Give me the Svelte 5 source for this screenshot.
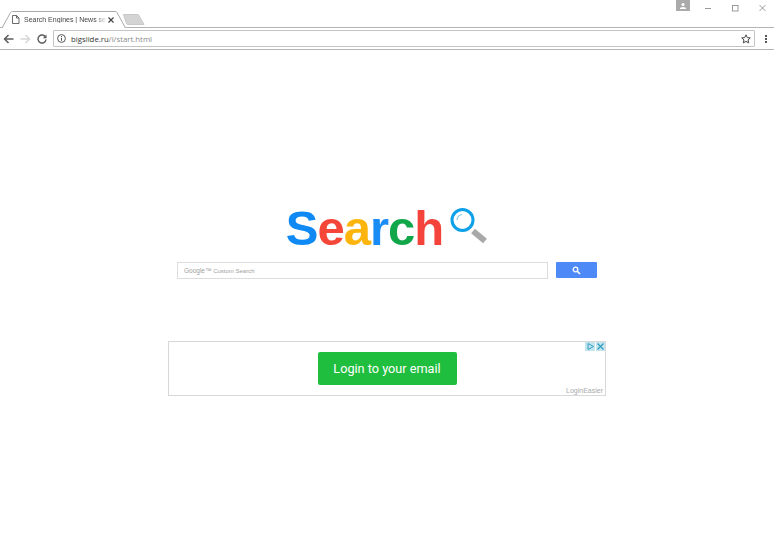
<script>
  const logoLetters = [
    { ch: 'S', color: '#0f8af5' },
    { ch: 'e', color: '#f4473a' },
    { ch: 'a', color: '#fdb50e' },
    { ch: 'r', color: '#1a8cf5' },
    { ch: 'c', color: '#12a64a' },
    { ch: 'h', color: '#f4433a' }
  ];
</script>

<div class="page">
  <header class="chrome">
    <div class="tabstrip">
      <div class="tab">
        <svg class="tab-fold" width="127" height="17" viewBox="0 0 127 17">
          <path d="M2 17 L10.500 1.500 Q11 .5 12.500 .5 L115 .5 Q116.500 .5 117 1.500 L125.500 17" fill="#fff" stroke="#a9a9a9" />
        </svg>
        <svg class="page-icon" width="8" height="9" viewBox="0 0 8 9">
          <path d="M.5.500h4L7 3v5.500H.5zM4.500.5V3H7" fill="none" stroke="#5a5a5a" stroke-width=".9" />
        </svg>
        <span class="tab-title">Search Engines | News se</span>
        <svg class="tab-x" width="6" height="6" viewBox="0 0 6 6"><path d="M.5.500l5 5M5.500.5l-5 5" stroke="#444" stroke-width="1.200" /></svg>
      </div>
      <svg class="new-tab" width="22" height="11" viewBox="0 0 22 11">
        <path d="M.5.500h14q1 0 1.500 1l5 9H5q-1 0-1.500-1z" fill="#d4d4d4" stroke="#c8c8c8" />
      </svg>
      <div class="window-controls">
        <div class="avatar">
          <svg width="8" height="8" viewBox="0 0 8 8"><circle cx="4" cy="2.400" r="1.500" fill="#fff" /><path d="M1 7V6Q4 3.800 7 6v1z" fill="#fff" /></svg>
        </div>
        <svg class="win" width="8" height="8" viewBox="0 0 8 8"><path d="M0 4.500h6" stroke="#999" /></svg>
        <svg class="win" width="8" height="8" viewBox="0 0 8 8"><rect x=".5" y="1.500" width="5.500" height="5.500" fill="none" stroke="#999" /></svg>
        <svg class="win" width="8" height="8" viewBox="0 0 8 8"><path d="M.5 1l6 6M6.500 1l-6 6" stroke="#999" /></svg>
      </div>
    </div>
    <div class="toolbar">
      <svg class="nav" width="11" height="10" viewBox="0 0 11 10"><path d="M10.500 5H1.500M5.500 1L1.500 5l4 4" fill="none" stroke="#5c5c5c" stroke-width="1.500" /></svg>
      <svg class="nav" width="11" height="10" viewBox="0 0 11 10"><path d="M.5 5h9M5.500 1l4 4-4 4" fill="none" stroke="#d8d8d8" stroke-width="1.500" /></svg>
      <svg class="nav" width="10" height="10" viewBox="0 0 10 10"><path d="M8.600 3.200A4 4 0 1 0 9 5.500" fill="none" stroke="#5c5c5c" stroke-width="1.400" /><path d="M9.500 .5v3.700H5.800z" fill="#5c5c5c" /></svg>
      <div class="omnibox">
        <svg width="9" height="9" viewBox="0 0 9 9"><circle cx="4.500" cy="4.500" r="3.900" fill="none" stroke="#555" /><path d="M4.500 3.800v3M4.500 2v1" stroke="#555" /></svg>
        <span class="url"><span class="host">bigslide.ru</span>/i/start.html</span>
        <svg class="star" width="10" height="10" viewBox="0 0 10 10"><path d="M5 .8l1.300 2.800 3 .3-2.300 2 .7 3L5 7.400 2.300 8.900l.7-3-2.300-2 3-.3z" fill="none" stroke="#444" /></svg>
      </div>
      <div class="kebab"><i></i><i></i><i></i></div>
    </div>
  </header>

  <main>
    <div class="logo">
      <div class="word">
        {#each logoLetters as l}
          <span style="color: {l.color}">{l.ch}</span>
        {/each}
      </div>
      <svg class="lens" width="40" height="38" viewBox="0 0 40 38">
        <path d="M24 24 L36 34" stroke="#a8a8a8" stroke-width="6" />
        <circle cx="13.500" cy="13" r="10.500" fill="#fff" stroke="#0ea0e8" stroke-width="3" />
        <path d="M8 13a6 6 0 0 1 5-5.500" fill="none" stroke="#7ccbf0" stroke-width="1.200" />
      </svg>
    </div>

    <form class="search" on:submit|preventDefault>
      <div class="field"><span class="g">Google™</span> Custom Search</div>
      <button class="go" type="submit" aria-label="Search">
        <svg width="9" height="9" viewBox="0 0 9 9"><circle cx="3.500" cy="3.500" r="2.300" fill="none" stroke="#fff" stroke-width="1.300" /><path d="M5.300 5.300L8 8" stroke="#fff" stroke-width="1.600" /></svg>
      </button>
    </form>

    <div class="ad">
      <button class="cta">Login to your email</button>
      <div class="adchoices">
        <span class="chip wide"><svg width="7" height="7" viewBox="0 0 7 7"><path d="M1 .5L6.500 3.500 1 6.500z" fill="none" stroke="#2f9fc4" /></svg></span>
        <span class="chip"><svg width="7" height="7" viewBox="0 0 7 7"><path d="M.5.500l6 6M6.500.5l-6 6" stroke="#2f9fc4" stroke-width="1.200" /></svg></span>
      </div>
      <span class="sponsor">LoginEasier</span>
    </div>
  </main>
</div>

<style>
  :global(body) {
    margin: 0;
    background: #fff;
  }

  .page {
    width: 774px;
    height: 554px;
    overflow: hidden;
    font-family: "Open Sans", "Liberation Sans", sans-serif;
    display: flex;
    flex-direction: column;
  }

  .chrome {
    height: 50px;
    flex: none;
    box-sizing: border-box;
    border-bottom: 1px solid #b5b5b5;
  }

  .tabstrip {
    height: 28px;
    box-sizing: border-box;
    border-bottom: 1px solid #b4b4b4;
    display: flex;
    align-items: flex-end;
    position: relative;
  }

  .tab {
    position: relative;
    width: 127px;
    height: 17px;
    margin-bottom: -1px;
    display: flex;
    align-items: center;
    box-sizing: border-box;
    padding-left: 12px;
  }

  .tab-fold {
    position: absolute;
    left: 0;
    top: 0;
  }

  .page-icon {
    position: relative;
    margin-right: 4px;
  }

  .tab-title {
    position: relative;
    font-family: "Liberation Sans", sans-serif;
    font-size: 7px;
    color: #444;
    width: 84px;
    white-space: nowrap;
    -webkit-mask-image: linear-gradient(to right, #000 84%, transparent 100%);
    mask-image: linear-gradient(to right, #000 84%, transparent 100%);
  }

  .tab-x {
    position: relative;
  }

  .new-tab {
    margin-left: -4px;
    margin-bottom: 2px;
  }

  .window-controls {
    position: absolute;
    right: 0;
    top: 0;
    display: flex;
    align-items: flex-start;
    height: 12px;
  }

  .avatar {
    width: 14px;
    height: 11px;
    background: #aaa;
    display: flex;
    align-items: center;
    justify-content: center;
    margin-right: 15px;
  }

  .win {
    margin-right: 19px;
    display: block;
    margin-top: 4px;
  }

  .win:last-child {
    margin-right: 7px;
  }

  .toolbar {
    height: 21px;
    display: flex;
    align-items: center;
    padding-left: 3px;
    background: #fff;
  }

  .nav {
    margin-right: 6px;
    flex: none;
  }

  .omnibox {
    width: 702px;
    height: 17px;
    box-sizing: border-box;
    border: 1px solid #c4c4c4;
    border-radius: 1px;
    display: flex;
    align-items: center;
    padding: 0 3px;
    gap: 5px;
  }

  .url {
    font-size: 7.800px;
    color: #8a8a8a;
    flex: 1;
  }

  .host {
    color: #333;
  }

  .kebab {
    margin-left: 10px;
    display: flex;
    flex-direction: column;
    gap: 1px;
  }

  .kebab i {
    width: 2px;
    height: 2px;
    background: #555;
    display: block;
  }

  main {
    flex: 1;
    display: flex;
    flex-direction: column;
    align-items: center;
    padding-top: 153px;
  }

  .logo {
    display: flex;
    align-items: flex-start;
    height: 50px;
    padding-left: 1px;
  }

  .word {
    font-family: "Liberation Sans", Arial, sans-serif;
    font-weight: 700;
    font-size: 49px;
    line-height: 50px;
    letter-spacing: -1px;
  }

  .lens {
    margin-left: 6px;
    margin-top: 4px;
  }

  .search {
    display: flex;
    gap: 8px;
    margin-top: 9px;
    align-items: flex-start;
  }

  .field {
    width: 371px;
    height: 17px;
    box-sizing: border-box;
    border: 1px solid #dcdcdc;
    font-size: 6px;
    line-height: 15px;
    color: #a0a0a0;
    padding-left: 6px;
    font-family: "Liberation Sans", sans-serif;
  }

  .g {
    font-size: 6.500px;
  }

  .go {
    width: 41px;
    height: 16px;
    border: 0;
    border-radius: 1px;
    background: #4d8af8;
    padding: 0;
    display: flex;
    align-items: center;
    justify-content: center;
  }

  .ad {
    position: relative;
    margin-top: 62px;
    width: 438px;
    height: 55px;
    box-sizing: border-box;
    border: 1px solid #d8d8d8;
    display: flex;
    justify-content: center;
    padding-top: 10px;
  }

  .cta {
    width: 139px;
    height: 33px;
    border: 0;
    border-radius: 2px;
    background: #1fbe3e;
    color: #fff;
    font-family: Roboto, sans-serif;
    font-size: 12.700px;
    padding: 0;
  }

  .adchoices {
    position: absolute;
    top: 0;
    right: 0;
    display: flex;
  }

  .chip {
    width: 9px;
    height: 9px;
    background: #c4e4ee;
    display: flex;
    align-items: center;
    justify-content: center;
  }

  .chip.wide {
    width: 10px;
    margin-right: 1px;
  }

  .sponsor {
    position: absolute;
    right: 2px;
    bottom: 1px;
    font-size: 7px;
    color: #aaa;
    font-family: "Liberation Sans", sans-serif;
  }
</style>
